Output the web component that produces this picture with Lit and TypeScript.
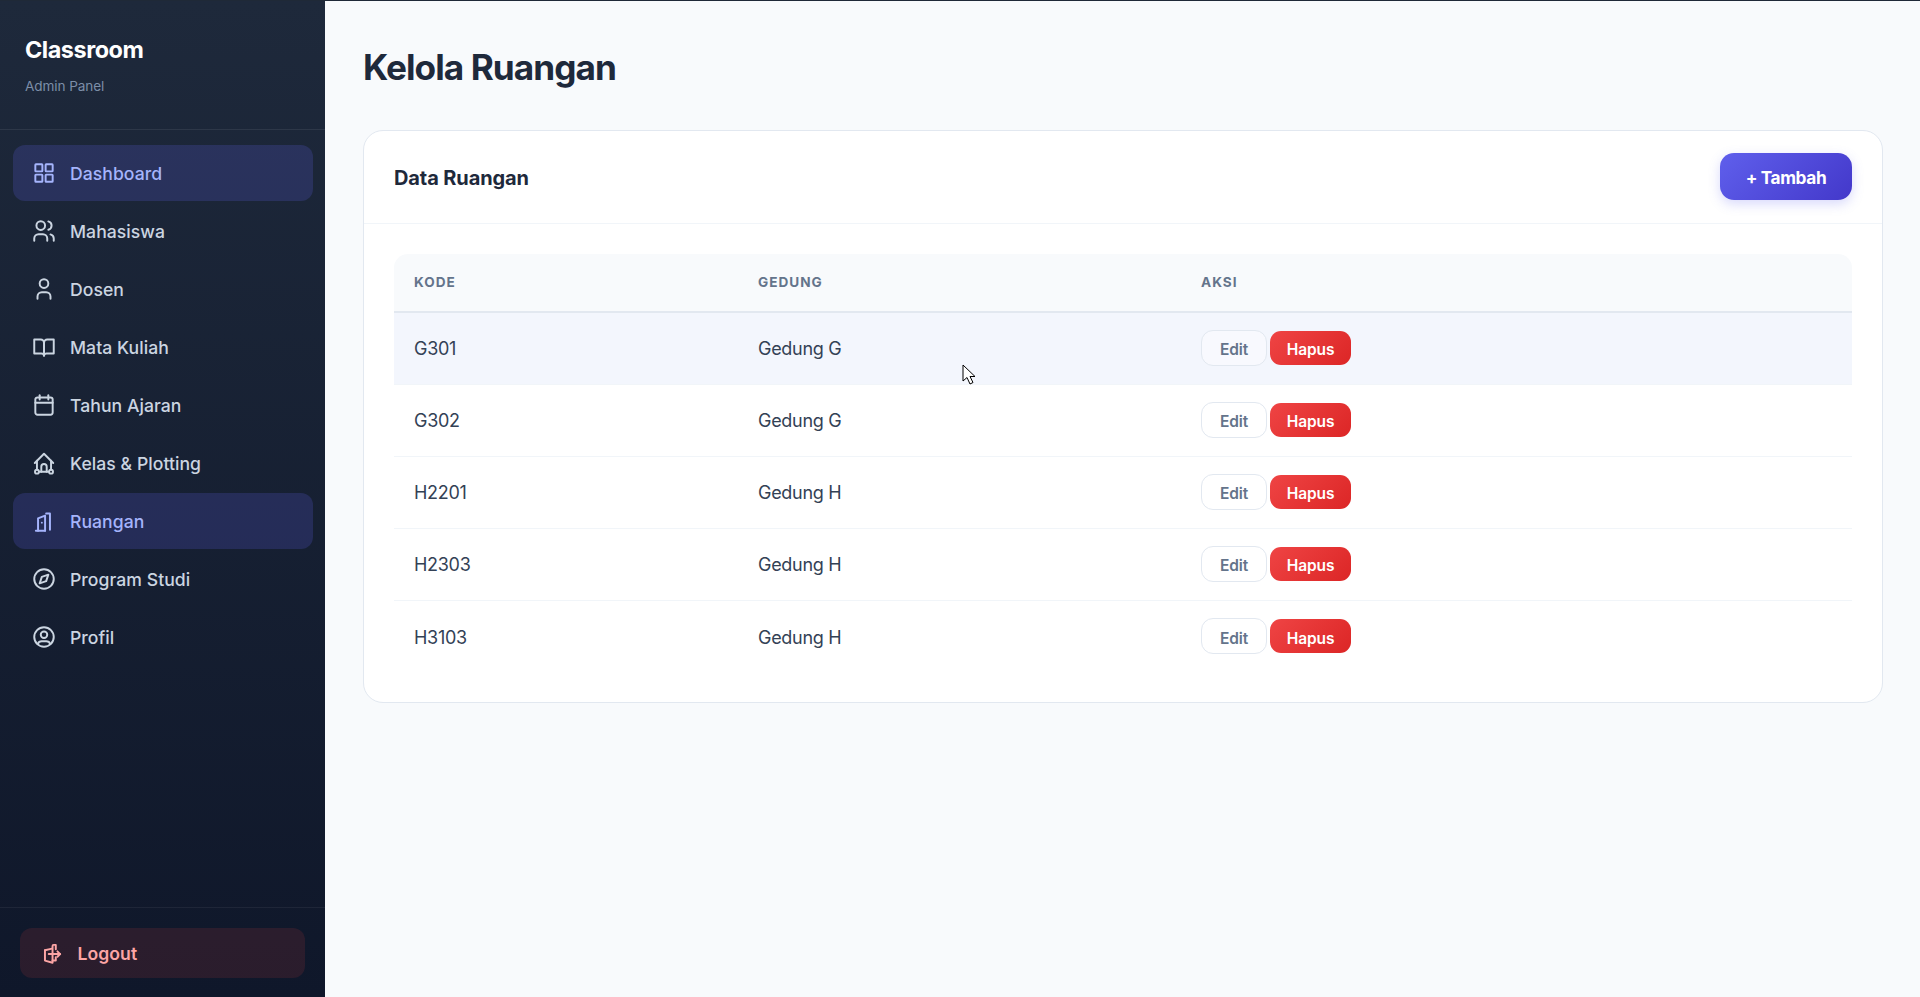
import { LitElement, html, css, svg } from "lit";
import { customElement } from "lit/decorators.js";

const icons: Record<string, unknown> = {
  dashboard: svg`<rect x="4" y="4" width="6.5" height="6.5" rx=".5"/><rect x="13.5" y="4" width="6.5" height="6.5" rx=".5"/><rect x="4" y="13.5" width="6.5" height="6.5" rx=".5"/><rect x="13.5" y="13.5" width="6.5" height="6.5" rx=".5"/>`,
  users: svg`<circle cx="9" cy="7" r="4"/><path d="M3 21v-2a4 4 0 0 1 4-4h4a4 4 0 0 1 4 4v2"/><path d="M16 3.13a4 4 0 0 1 0 7.75"/><path d="M21 21v-2a4 4 0 0 0-3-3.85"/>`,
  user: svg`<circle cx="12" cy="7" r="4"/><path d="M6 21v-2a4 4 0 0 1 4-4h4a4 4 0 0 1 4 4v2"/>`,
  book: svg`<path d="M3 5h6a3 3 0 0 1 3 3v12a2.5 2.5 0 0 0-2.5-2H3z"/><path d="M21 5h-6a3 3 0 0 0-3 3v12a2.5 2.5 0 0 1 2.5-2H21z"/>`,
  calendar: svg`<rect x="4" y="5" width="16" height="16" rx="2"/><path d="M16 3v4"/><path d="M8 3v4"/><path d="M4 10h16"/>`,
  school: svg`<path d="M3.5 12L12 3.5l8.5 8.5"/><path d="M5.5 10v8"/><path d="M18.5 10v8"/><circle cx="5.5" cy="20" r="1.8"/><circle cx="18.5" cy="20" r="1.8"/><path d="M9.5 20v-4.5a2.5 2.5 0 0 1 5 0V20"/><path d="M7.5 20h9"/>`,
  door: svg`<path d="M4.5 21H13"/><path d="M6.5 21V9.5L13 7v14"/><path d="M14 5h3.5v15"/><path d="M10 13.5v.01"/>`,
  compass: svg`<path d="M8 16l2-6 6-2-2 6z"/><circle cx="12" cy="12" r="9"/>`,
  profile: svg`<circle cx="12" cy="12" r="9"/><circle cx="12" cy="10" r="3"/><path d="M6.2 18.5A4 4 0 0 1 10 16h4a4 4 0 0 1 3.8 2.5"/>`,
  logout: svg`<path d="M5.5 9.5L12 8"/><path d="M5.5 9.5V19l7 2V5.5a1 1 0 0 1 1-1h2v4"/><path d="M15.5 16v3h-3"/><path d="M9 13h10.5"/><path d="M17 10.5l2.5 2.5-2.5 2.5"/>`,
};

const navItems = [
  ["Dashboard", "dashboard", true],
  ["Mahasiswa", "users", false],
  ["Dosen", "user", false],
  ["Mata Kuliah", "book", false],
  ["Tahun Ajaran", "calendar", false],
  ["Kelas & Plotting", "school", false],
  ["Ruangan", "door", true],
  ["Program Studi", "compass", false],
  ["Profil", "profile", false],
] as const;

const rooms = [
  ["G301", "Gedung G"],
  ["G302", "Gedung G"],
  ["H2201", "Gedung H"],
  ["H2303", "Gedung H"],
  ["H3103", "Gedung H"],
];

@customElement("app-root")
export class AppRoot extends LitElement {
  static styles = css`
    :host {
      display: block;
      height: 997px;
      font-family: Inter, "Liberation Sans", sans-serif;
      background: #f8fafc;
      color: #1e293b;
      overflow: hidden;
    }
    .shell {
      position: relative;
      display: flex;
      height: 100%;
      border-top: 1px solid #1f2937;
      box-sizing: border-box;
    }
    .side {
      width: 325px;
      flex: none;
      display: flex;
      flex-direction: column;
      background: linear-gradient(180deg, #1e293b 0%, #0f172a 100%);
    }
    .brand {
      height: 129px;
      box-sizing: border-box;
      padding: 35px 25px 0;
      border-bottom: 1px solid rgba(255, 255, 255, 0.08);
    }
    .brand h1 {
      margin: 0;
      font-size: 23.4px;
      line-height: 28px;
      font-weight: 700;
      letter-spacing: -0.45px;
      color: #fff;
    }
    .brand p {
      margin: 14px 0 0;
      font-size: 13.6px;
      line-height: 16px;
      letter-spacing: -0.1px;
      color: #7c8ea8;
    }
    nav {
      flex: 1;
      display: flex;
      flex-direction: column;
      gap: 2px;
      padding: 15px 12px 0 13px;
    }
    .item {
      height: 56px;
      display: flex;
      align-items: center;
      gap: 13px;
      padding: 0 18px;
      border-radius: 12px;
      font-size: 17.6px;
      font-weight: 550;
      letter-spacing: 0.05px;
      color: #cbd5e1;
    }
    .item.active {
      background: rgba(99, 102, 241, 0.2);
      color: #a5b4fc;
    }
    .icon {
      width: 26px;
      height: 26px;
      flex: none;
      fill: none;
      stroke: currentColor;
      stroke-width: 1.8;
      stroke-linecap: round;
      stroke-linejoin: round;
    }
    .foot {
      border-top: 1px solid rgba(255, 255, 255, 0.06);
      padding: 20px 20px 19px;
    }
    .logout {
      height: 50px;
      display: flex;
      align-items: center;
      gap: 12.5px;
      padding: 0 19px;
      border-radius: 12px;
      background: rgba(239, 68, 68, 0.12);
      color: #fca5a5;
      font-size: 17.6px;
      font-weight: 600;
      letter-spacing: 0.05px;
    }
    main {
      flex: 1;
      padding: 0 37px 0 38px;
    }
    .title {
      margin: 0;
      padding-top: 44px;
      height: 129px;
      box-sizing: border-box;
      font-size: 35.2px;
      line-height: 44px;
      font-weight: 700;
      letter-spacing: -0.95px;
      color: #1e293b;
    }
    .card {
      background: #fff;
      border: 1px solid #e2e8f0;
      border-radius: 20px;
      height: 573px;
      box-sizing: border-box;
    }
    .card-head {
      height: 93px;
      box-sizing: border-box;
      display: flex;
      align-items: center;
      justify-content: space-between;
      padding: 0 30px;
      border-bottom: 1px solid #f1f5f9;
    }
    .card-head h2 {
      margin: 2px 0 0;
      font-size: 20px;
      font-weight: 700;
      letter-spacing: -0.1px;
      color: #1e293b;
    }
    .add {
      width: 132px;
      height: 47px;
      margin-top: -1px;
      border-radius: 14px;
      display: flex;
      align-items: center;
      justify-content: center;
      color: #fff;
      font-size: 17.3px;
      font-weight: 700;
      letter-spacing: -0.4px;
      padding-top: 1px;
      box-sizing: border-box;
      background: linear-gradient(135deg, #5f5fec, #4338ca);
      box-shadow: 0 4px 12px rgba(99, 102, 241, 0.25);
    }
    .body {
      padding: 30px;
    }
    table {
      width: 100%;
      border-collapse: separate;
      border-spacing: 0;
      table-layout: fixed;
    }
    th {
      height: 59px;
      box-sizing: border-box;
      padding: 0 20px 2px;
      text-align: left;
      background: #f8fafc;
      border-bottom: 2px solid #e2e8f0;
      font-size: 13.6px;
      font-weight: 700;
      letter-spacing: 1px;
      color: #64748b;
    }
    th:first-child {
      border-top-left-radius: 14px;
    }
    th:last-child {
      border-top-right-radius: 14px;
    }
    td {
      height: 72px;
      box-sizing: border-box;
      padding: 0 20px;
      border-bottom: 1px solid #f1f5f9;
      font-size: 18px;
      letter-spacing: -0.3px;
      color: #334155;
    }
    tr.hover td {
      background: #f3f6fd;
    }
    tr:last-child td {
      border-bottom: none;
    }
    .actions {
      display: flex;
      align-items: center;
      gap: 3px;
      padding-bottom: 2px;
    }
    .edit,
    .del {
      display: flex;
      align-items: center;
      justify-content: center;
      box-sizing: border-box;
      font-size: 15.5px;
      font-weight: 600;
      letter-spacing: -0.1px;
      padding-top: 4px;
    }
    .edit {
      width: 66px;
      height: 36px;
      border: 1px solid #e2e8f0;
      border-radius: 12px;
      background: rgba(255, 255, 255, 0.4);
      color: #64748b;
    }
    .del {
      width: 81px;
      height: 34px;
      border-radius: 11px;
      background: linear-gradient(135deg, #ef4444, #dc2626);
      color: #fff;
    }
    .cursor {
      position: absolute;
      left: 962px;
      top: 363px;
      width: 14px;
      height: 22px;
    }
  `;

  render() {
    return html`
      <div class="shell">
        <aside class="side">
          <div class="brand">
            <h1>Classroom</h1>
            <p>Admin Panel</p>
          </div>
          <nav>
            ${navItems.map(
              ([label, icon, active]) => html`
                <div class="item ${active ? "active" : ""}">
                  <svg class="icon" viewBox="0 0 24 24">${icons[icon]}</svg>
                  <span>${label}</span>
                </div>
              `
            )}
          </nav>
          <div class="foot">
            <div class="logout">
              <svg class="icon" viewBox="0 0 24 24">${icons.logout}</svg>
              <span>Logout</span>
            </div>
          </div>
        </aside>
        <main>
          <div class="title">Kelola Ruangan</div>
          <section class="card">
            <div class="card-head">
              <h2>Data Ruangan</h2>
              <div class="add">+ Tambah</div>
            </div>
            <div class="body">
              <table>
                <colgroup>
                  <col style="width:344px" />
                  <col style="width:443px" />
                  <col />
                </colgroup>
                <thead>
                  <tr><th>KODE</th><th>GEDUNG</th><th>AKSI</th></tr>
                </thead>
                <tbody>
                  ${rooms.map(
                    ([code, building], i) => html`
                      <tr class=${i === 0 ? "hover" : ""}>
                        <td>${code}</td>
                        <td>${building}</td>
                        <td>
                          <div class="actions">
                            <div class="edit">Edit</div>
                            <div class="del">Hapus</div>
                          </div>
                        </td>
                      </tr>
                    `
                  )}
                </tbody>
              </table>
            </div>
          </section>
        </main>
        <svg class="cursor" viewBox="0 0 14 22">
          <path d="M1 1v16l4-3.5 3 6.5 3-1.5-3-6h5z" fill="#fff" stroke="#000" stroke-width="1" />
        </svg>
      </div>
    `;
  }
}
